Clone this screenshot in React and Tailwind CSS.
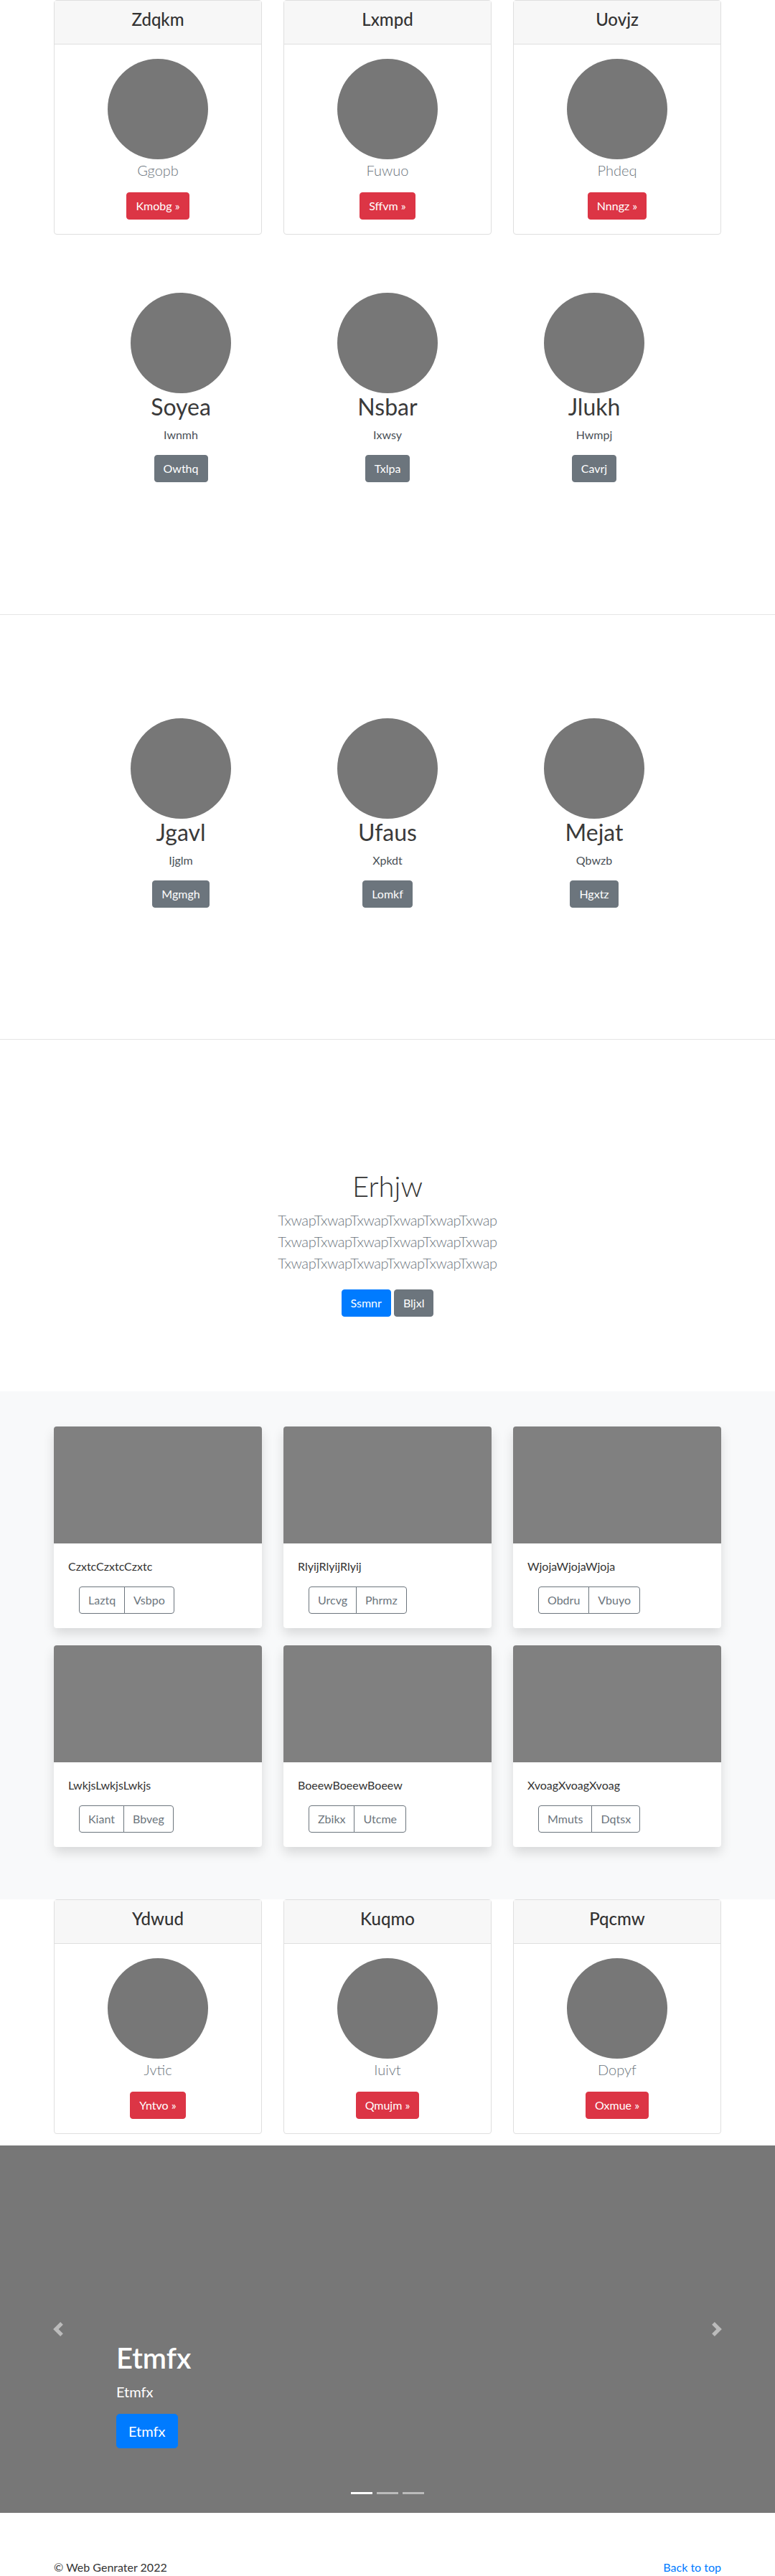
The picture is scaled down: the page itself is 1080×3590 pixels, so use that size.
import React from 'react';

const preciosArriba = [
  { titulo: 'Zdqkm', sub: 'Ggopb', boton: 'Kmobg' },
  { titulo: 'Lxmpd', sub: 'Fuwuo', boton: 'Sffvm' },
  { titulo: 'Uovjz', sub: 'Phdeq', boton: 'Nnngz' },
];

const preciosAbajo = [
  { titulo: 'Ydwud', sub: 'Jvtic', boton: 'Yntvo' },
  { titulo: 'Kuqmo', sub: 'Iuivt', boton: 'Qmujm' },
  { titulo: 'Pqcmw', sub: 'Dopyf', boton: 'Oxmue' },
];

const equipoUno = [
  { nombre: 'Soyea', sub: 'Iwnmh', boton: 'Owthq' },
  { nombre: 'Nsbar', sub: 'Ixwsy', boton: 'Txlpa' },
  { nombre: 'Jlukh', sub: 'Hwmpj', boton: 'Cavrj' },
];

const equipoDos = [
  { nombre: 'Jgavl', sub: 'Ijglm', boton: 'Mgmgh' },
  { nombre: 'Ufaus', sub: 'Xpkdt', boton: 'Lomkf' },
  { nombre: 'Mejat', sub: 'Qbwzb', boton: 'Hgxtz' },
];

const album = [
  { texto: 'CzxtcCzxtcCzxtc', a: 'Laztq', b: 'Vsbpo' },
  { texto: 'RlyijRlyijRlyij', a: 'Urcvg', b: 'Phrmz' },
  { texto: 'WjojaWjojaWjoja', a: 'Obdru', b: 'Vbuyo' },
  { texto: 'LwkjsLwkjsLwkjs', a: 'Kiant', b: 'Bbveg' },
  { texto: 'BoeewBoeewBoeew', a: 'Zbikx', b: 'Utcme' },
  { texto: 'XvoagXvoagXvoag', a: 'Mmuts', b: 'Dqtsx' },
];

const TarjetaPrecio = ({ titulo, sub, boton }) => (
  <div className="flex flex-col rounded border border-[#dfdfdf] bg-white text-center">
    <div className="border-b border-[#dfdfdf] bg-[#f7f7f7] px-5 py-3">
      <h4 className="mb-2 text-2xl font-medium leading-[28px] text-[#333]">{titulo}</h4>
    </div>
    <div className="flex flex-col items-center p-5">
      <div className="h-[140px] w-[140px] rounded-full bg-[#777]" />
      <p className="mb-4 text-xl font-light leading-[1.5] text-[#6c757d]">{sub}</p>
      <button className="rounded border border-[#dc3545] bg-[#dc3545] px-3 py-1.5 text-base leading-6 text-white">
        {boton} »
      </button>
    </div>
  </div>
);

const Persona = ({ nombre, sub, boton }) => (
  <div className="flex flex-col items-center text-center">
    <div className="h-[140px] w-[140px] rounded-full bg-[#777]" />
    <h2 className="mb-2 text-[32px] font-normal leading-[38px] text-[#3a3a3a]">{nombre}</h2>
    <p className="mb-4 text-base leading-6 text-[#495057]">{sub}</p>
    <button className="rounded border border-[#6c757d] bg-[#6c757d] px-3 py-1.5 text-base leading-6 text-white">{boton}</button>
  </div>
);

const TarjetaAlbum = ({ texto, a, b }) => (
  <div className="overflow-hidden rounded bg-white shadow-[0_8px_16px_rgba(0,0,0,0.13)]">
    <div className="h-[163px] w-full bg-[#808080]" />
    <div className="p-5">
      <p className="mb-4 text-base leading-6 text-[#333]">{texto}</p>
      <div className="ml-[15px] inline-flex">
        <button className="rounded-l border border-[#6c757d] px-3 py-1.5 text-base leading-6 text-[#6c757d]">{a}</button>
        <button className="-ml-px rounded-r border border-[#6c757d] px-3 py-1.5 text-base leading-6 text-[#6c757d]">{b}</button>
      </div>
    </div>
  </div>
);

const Flecha = ({ d }) => (
  <svg width="20" height="20" viewBox="0 0 8 8" fill="#fff">
    <path d={d} />
  </svg>
);

const App = () => {
  const linea = 'Txwap'.repeat(6);

  return (
    <div className="min-h-screen bg-white font-['Lato','Open_Sans',sans-serif] text-[#212529]">

      {/* precios arriba */}
      <div className="mx-auto mb-[17px] grid w-[930px] grid-cols-3 gap-[30px]">
        {preciosArriba.map((p, i) => (
          <TarjetaPrecio key={i} {...p} />
        ))}
      </div>

      {/* equipo 1 */}
      <section className="border-b border-black/10 pb-[184px] pt-16">
        <div className="mx-auto grid w-[864px] grid-cols-3">
          {equipoUno.map((p, i) => (
            <Persona key={i} {...p} />
          ))}
        </div>
      </section>

      {/* equipo 2 */}
      <section className="border-b border-black/10 pb-[183px] pt-36">
        <div className="mx-auto grid w-[864px] grid-cols-3">
          {equipoDos.map((p, i) => (
            <Persona key={i} {...p} />
          ))}
        </div>
      </section>

      {/* jumbotron */}
      <section className="pb-[104px] pt-[180px] text-center">
        <h1 className="mb-2 text-[40px] font-light leading-[1.2] text-[#333]">Erhjw</h1>
        <p className="mb-[22px] text-xl font-light leading-[1.5] tracking-[-0.4px] text-[#6c757d]">
          {linea}<br />{linea}<br />{linea}
        </p>
        <div className="flex justify-center gap-1">
          <button className="rounded border border-[#007bff] bg-[#007bff] px-3 py-1.5 text-base leading-6 text-white">Ssmnr</button>
          <button className="rounded border border-[#6c757d] bg-[#6c757d] px-3 py-1.5 text-base leading-6 text-white">Bljxl</button>
        </div>
      </section>

      {/* album */}
      <section className="bg-[#f8f9fa] pb-[73px] pt-[49px]">
        <div className="mx-auto grid w-[930px] grid-cols-3 gap-x-[30px] gap-y-6">
          {album.map((c, i) => (
            <TarjetaAlbum key={i} {...c} />
          ))}
        </div>
      </section>

      {/* precios abajo */}
      <div className="mx-auto mb-4 grid w-[930px] grid-cols-3 gap-[30px]">
        {preciosAbajo.map((p, i) => (
          <TarjetaPrecio key={i} {...p} />
        ))}
      </div>

      {/* carrusel */}
      <div className="relative h-[512px] bg-[#777]">
        <div className="absolute bottom-0 left-0 top-0 flex w-[15%] items-center justify-center opacity-50">
          <Flecha d="M5.25 0l-4 4 4 4 1.5-1.5L4.25 4l2.5-2.5L5.25 0z" />
        </div>
        <div className="absolute bottom-0 right-0 top-0 flex w-[15%] items-center justify-center opacity-50">
          <Flecha d="M2.75 0l-1.5 1.5L3.75 4l-2.5 2.5L2.75 8l4-4-4-4z" />
        </div>

        <div className="absolute bottom-[54px] left-[15%] right-[15%] pb-5 pt-5 text-left text-white">
          <h1 className="mb-2 text-[40px] font-semibold leading-[48px]">Etmfx</h1>
          <p className="mb-4 text-xl leading-[30px]">Etmfx</p>
          <div className="mb-4 flex">
            <button className="rounded-[0.3rem] border border-[#007bff] bg-[#007bff] px-4 py-2 text-xl leading-[30px] text-white">Etmfx</button>
          </div>
        </div>

        <div className="absolute inset-x-0 bottom-[26px] flex justify-center">
          <span className="mx-[3px] h-[3px] w-[30px] bg-white" />
          <span className="mx-[3px] h-[3px] w-[30px] bg-white/50" />
          <span className="mx-[3px] h-[3px] w-[30px] bg-white/50" />
        </div>
      </div>

      {/* pie */}
      <footer className="mx-auto mt-16 flex w-[930px] justify-between">
        <p className="text-base leading-6 text-[#333]">© Web Genrater 2022</p>
        <a href="#" className="text-base leading-6 text-[#007bff]">Back to top</a>
      </footer>
    </div>
  );
};

export default App;
